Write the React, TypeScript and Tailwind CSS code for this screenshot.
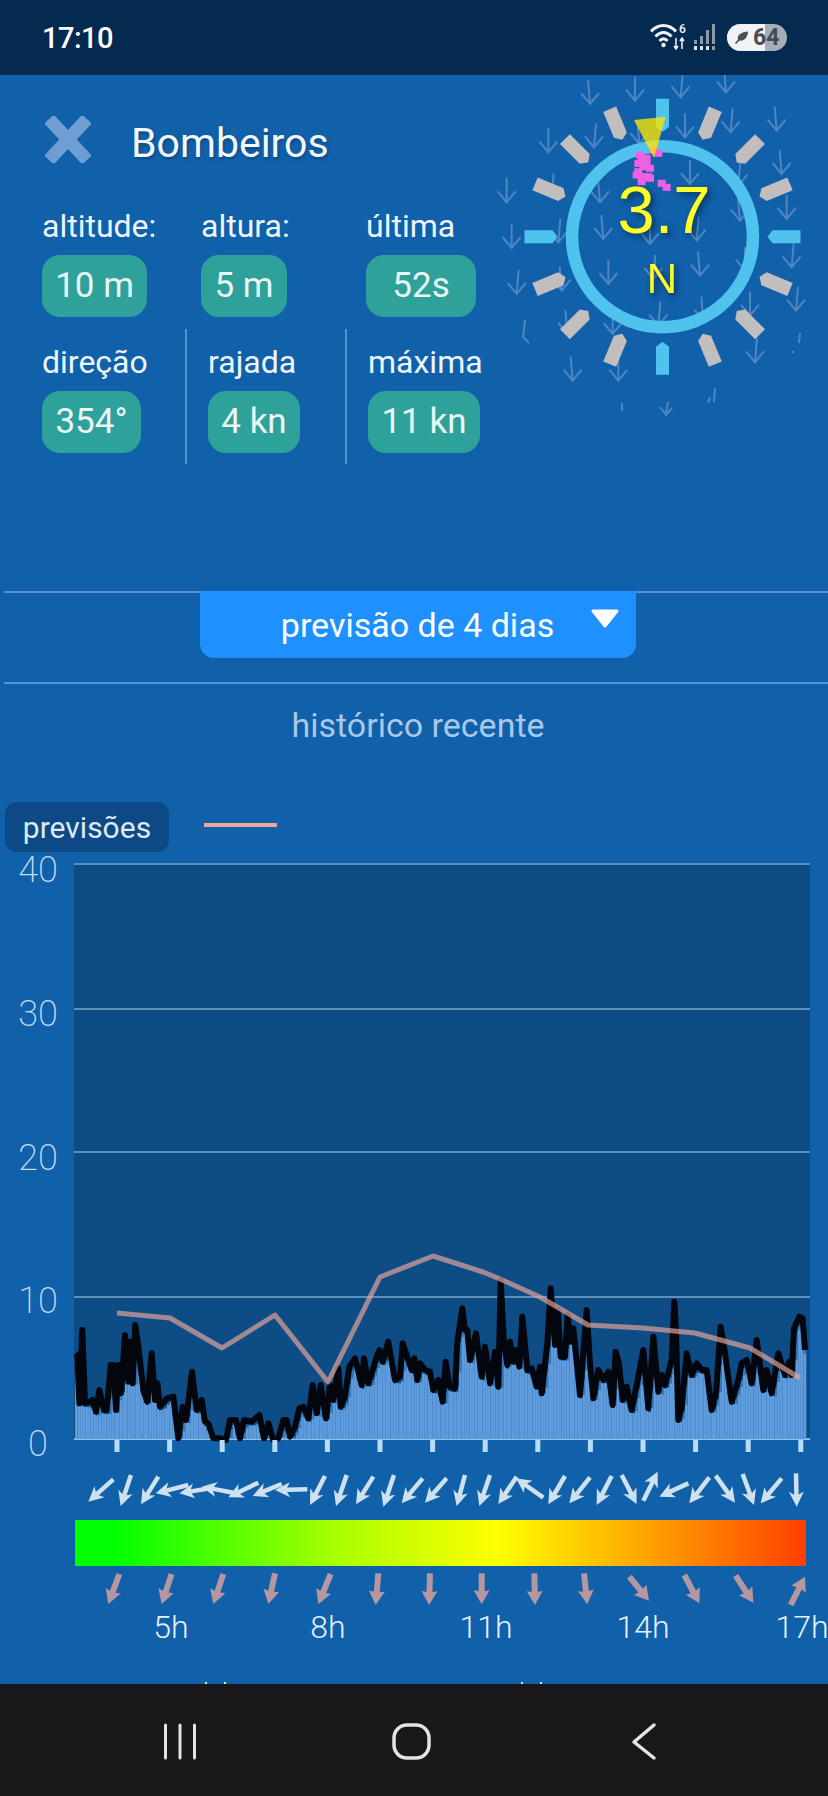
import React from "react";

type Pt = [number, number];

// wind line, traced from the chart (crop coordinates, converted below)
const lineA: Pt[] = [[47,370],[52,375],[58,520],[67,300],[75,520],[90,515],[97,510],[108,545],[118,480],[132,540],[140,540],[152,405],[160,405],[168,540],[175,405],[183,490],[195,315],[205,455],[210,335],[218,460],[226,285],[235,350],[250,480],[262,515],[275,370],[285,510],[292,460],[300,530],[320,505],[340,500],[355,625],[368,530],[378,570],[396,425],[410,540],[425,510],[435,575],[445,580],[460,625],[480,625],[498,630],[510,570],[528,570],[540,625],[552,570],[575,575],[598,555],[612,625],[625,580],[640,630],[655,625],[670,570],[680,570],[690,620],[705,590],[718,535],[730,530],[745,565],[758,465],[770,550],[782,465],[798,565],[810,465],[820,510],[835,415],[842,530],[855,500],[868,410],[885,385],[905,465],[912,385],[925,460],[935,430],[950,380],[958,360],[968,395],[985,335],[1005,450],[1020,440],[1028,340],[1045,390],[1055,420],[1063,385],[1072,450],[1080,400],[1095,420]];
const lineB: Pt[] = [[0,425],[10,480],[25,450],[38,515],[47,395],[58,470],[75,475],[82,335],[97,235],[105,300],[112,300],[120,390],[138,310],[155,440],[165,350],[180,460],[195,365],[205,470],[212,150],[222,340],[232,405],[240,335],[250,395],[258,360],[268,410],[277,260],[292,420],[305,415],[320,470],[330,410],[335,490],[352,340],[362,175],[375,345],[383,240],[392,380],[405,380],[413,255],[420,335],[430,295],[450,495],[470,240],[480,400],[490,505],[505,420],[520,450],[535,425],[548,525],[557,365],[567,400],[578,510],[590,470],[605,540],[620,465],[640,360],[655,535],[670,320],[685,485],[695,435],[705,465],[725,390],[733,215],[738,300],[745,570],[755,530],[770,370],[785,435],[800,400],[815,420],[830,420],[845,540],[858,490],[872,290],[885,370],[905,515],[925,450],[935,400],[950,390],[965,460],[980,330],[1000,480],[1010,420],[1025,490],[1045,370],[1065,435],[1078,395],[1085,435],[1092,295],[1108,260],[1118,265],[1125,360]];

const windLine: Pt[] = [
  ...lineA.map(([x, y]): Pt => [60 + x / 3, 1230 + y / 3]),
  ...lineB.map(([x, y]): Pt => [430 + x / 3, 1230 + y / 3]),
];

const forecastLine: Pt[] = [[117,1313],[170,1318],[222,1348],[275,1315],[328,1382],[380,1277],[433,1256],[483,1272],[500,1279],[540,1297],[588,1325],[643,1328],[695,1333],[750,1348],[800,1378]];

const BASE = 1439;
const yTicks = [
  { label: "40", y: 864, ty: 882 },
  { label: "30", y: 1009, ty: 1026 },
  { label: "20", y: 1152, ty: 1170 },
  { label: "10", y: 1297, ty: 1313 },
  { label: "0", y: 1439, ty: 1456 },
];
const xTicks = Array.from({ length: 14 }, (_, i) => 117 + i * 52.6);

const heightAt = (x: number) => {
  for (let i = 1; i < windLine.length; i++) {
    const [x0, y0] = windLine[i - 1];
    const [x1, y1] = windLine[i];
    if (x <= x1) {
      const t = x1 === x0 ? 0 : (x - x0) / (x1 - x0);
      return BASE - (y0 + (y1 - y0) * Math.max(t, 0));
    }
  }
  return BASE - windLine[windLine.length - 1][1];
};

const minHeight = (x: number, w: number) => {
  let m = Infinity;
  for (let d = -w; d <= w; d += 1) m = Math.min(m, heightAt(x + d));
  return m;
};

const bars = Array.from({ length: 278 }, (_, i) => {
  const x = 75 + i * 2.63;
  return {
    x,
    dark: Math.max(minHeight(x, 1) - 5, 0),
    light: Math.max(minHeight(x, 3) - 4, 0),
  };
});

const toPoints = (pts: Pt[]) => pts.map(([x, y]) => `${x},${y}`).join(" ");

// tail -> tip arrow with a wedge head
const Arrow = ({ from, to, shaft, headW, headL, notch, fill }: { from: Pt; to: Pt; shaft: number; headW: number; headL: number; notch: number; fill: string }) => {
  const dx = to[0] - from[0];
  const dy = to[1] - from[1];
  const len = Math.hypot(dx, dy) || 1;
  const ux = dx / len;
  const uy = dy / len;
  const nx = -uy;
  const ny = ux;
  const at = (along: number, side: number) => `${from[0] + ux * along + nx * side},${from[1] + uy * along + ny * side}`;
  const pts = [
    at(0, shaft / 2),
    at(len - headL + notch, shaft / 2),
    at(len - headL, headW / 2),
    at(len, 0),
    at(len - headL, -headW / 2),
    at(len - headL + notch, -shaft / 2),
    at(0, -shaft / 2),
  ].join(" ");
  return <polygon points={pts} fill={fill} />;
};

const z7 = ([a, b, c, d]: number[]): [Pt, Pt] => [[60 + a / 3, 1460 + b / 3], [60 + c / 3, 1460 + d / 3]];
const z8 = ([a, b, c, d]: number[]): [Pt, Pt] => [[430 + a / 3, 1460 + b / 3], [430 + c / 3, 1460 + d / 3]];

const windArrows: [Pt, Pt][] = [
  ...[[160,58,85,125],[213,45,182,138],[295,50,243,133],[385,75,287,100],[450,85,358,100],[520,98,425,80],[595,68,505,112],[665,72,578,108],[742,88,645,90],[795,48,750,135],[860,45,828,138],[940,50,888,133],[1002,45,970,140],[1088,55,1025,130],[1160,55,1095,128]].map(z7),
  ...[[105,45,80,138],[180,45,148,138],[260,50,205,132],[340,113,258,55],[405,48,355,133],[480,52,418,130],[545,48,500,135],[575,45,620,132],[640,122,683,35],[775,70,688,110],[838,52,778,130],[857,47,915,128],[938,42,972,135],[1055,55,992,130],[1098,40,1100,140]].map(z8),
];

const forecastArrows: [Pt, Pt][] = [
  ...[[178,342,145,432],[335,342,305,432],[490,342,460,432],[645,340,625,432],[812,342,775,432],[955,340,947,435],[1110,340,1107,435]].map(z7),
  ...[[155,340,155,433],[313,340,315,435],[462,340,472,433],[598,350,657,422],[763,345,808,430],[917,347,970,428],[1082,435,1125,350]].map(z8),
];

const hours = [
  { label: "5h", x: 171 },
  { label: "8h", x: 328 },
  { label: "11h", x: 486 },
  { label: "14h", x: 643 },
  { label: "17h", x: 802 },
];

// compass drawing, coordinates from a 3x crop starting at (490,75)
const faintArrows: number[][] = [[300,30],[435,20],[572,10],[708,-5],[175,175],[312,160],[448,150],[585,130],[722,115],[860,110],[50,325],[185,310],[330,325],[600,270],[745,275],[875,240],[65,462],[205,445],[340,435],[480,450],[620,440],[750,380],[890,375],[80,600],[215,590],[355,570],[490,555],[630,545],[765,530],[905,520],[232,720],[368,720],[505,695],[640,680],[780,665],[918,650],[248,860],[385,860],[795,805]];
const pinkSquares: Pt[] = [[505,250],[490,240],[470,265],[455,270],[445,280],[470,285],[480,295],[445,305],[440,315],[460,320],[480,325],[455,335],[475,320],[460,290],[450,255],[515,340],[530,352]];
const CX = 172.5;
const CY = 161.7;

const Compass = () => (
  <svg width="338" height="345" viewBox="0 0 338 345" className="shrink-0">
    {faintArrows.map(([x, y], i) => {
      const px = x / 3;
      const py = y / 3 - 5;
      const lean = (i % 3) - 1;
      return (
        <path
          key={i}
          d={`M${px + lean * 2} ${py}L${px} ${py + 24}M${px - 9} ${py + 13}L${px} ${py + 24}L${px + 9} ${py + 13}`}
          stroke="#4f86c0"
          strokeWidth="2"
          fill="none"
        />
      );
    })}
    <path d="M35 245L33 262L39 268M132 328V336M178 327L176 338M170 332L176 340L182 333M218 328L220 322M224 327L225 313M310 258L309 268M303 276V278" stroke="#4f86c0" strokeWidth="2" fill="none" />
    {Array.from({ length: 16 }, (_, i) => {
      const major = i % 4 === 0;
      const w = major ? 6.5 : 7;
      return (
        <polygon
          key={i}
          transform={`rotate(${i * 22.5} ${CX} ${CY})`}
          points={`${CX - w},${CY - 138} ${CX + w},${CY - 138} ${CX + w},${CY - 110} ${CX},${CY - 105} ${CX - w},${CY - 110}`}
          fill={major ? "#4fc3ee" : "#c2bebd"}
        />
      );
    })}
    <circle cx={CX} cy={CY} r="90.5" fill="none" stroke="#4fc3ee" strokeWidth="12.5" />
    {pinkSquares.map(([x, y], i) => (
      <rect key={i} x={x / 3 - 4} y={y / 3 - 8.5} width="8" height="7" fill="#f060e0" />
    ))}
    <polygon points="144,45 175.7,41.7 164,83" fill="#ffe600" fillOpacity="0.78" />
    <g style={{ filter: "drop-shadow(3px 3px 3px rgba(0,0,0,0.45))" }}>
      <text x="174" y="158" textAnchor="middle" fontSize="67" fill="#ffff26" fontFamily="'Liberation Sans', sans-serif">3.7</text>
      <text x="172" y="218" textAnchor="middle" fontSize="42" fill="#ffff26" fontFamily="'Liberation Sans', sans-serif">N</text>
    </g>
  </svg>
);

const Stat = ({ label, value, pillW }: { label: string; value: string; pillW: string }) => (
  <div className="flex flex-col">
    <div className="h-[36px] text-[32px] leading-[36px] text-[#eef5fb] whitespace-nowrap">{label}</div>
    <div className={`mt-[11px] h-[62px] rounded-[18px] bg-[#2ea19b] flex items-center justify-center text-[35px] text-[#e9f6f5] ${pillW}`}>{value}</div>
  </div>
);

const StatusBar = () => (
  <div className="h-[75px] shrink-0 bg-[#052a50] flex items-center justify-between pl-[42px] pr-[41px]">
    <span className="text-[29px] font-medium text-white tracking-[-0.5px] mt-[2px]">17:10</span>
    <div className="flex items-center -mt-[1px]">
      <svg width="38" height="28" viewBox="0 0 38 28" fill="none" stroke="#f2f5f8" strokeLinecap="butt">
        <path d="M1 8.5C8.500 0.5 18.500 0.5 26 8.500" strokeWidth="3" />
        <path d="M5.500 13.500C10.500 8 16.500 8 21.500 13.500" strokeWidth="3" />
        <path d="M9.500 18C12 15 15 15 17.500 18" strokeWidth="3" />
        <circle cx="13.500" cy="22" r="2.200" fill="#f2f5f8" stroke="none" />
        <path d="M26 15V26M24 23L26 26L28 23M32 26V15M30 18L32 15L34 18" strokeWidth="1.500" />
        <text x="29" y="10" fontSize="12" fontWeight="500" fill="#f2f5f8" stroke="none">6</text>
      </svg>
      <svg width="26" height="28" viewBox="0 0 26 28" className="ml-[5px]" fill="#8e99a6">
        <rect x="1" y="17" width="3" height="4" />
        <rect x="7" y="13" width="3" height="8" />
        <rect x="13" y="7" width="3" height="14" />
        <rect x="19" y="1" width="3" height="20" />
        <rect x="1" y="23" width="3" height="4" fill="#dfe4ea" />
        <rect x="7" y="23" width="3" height="4" fill="#dfe4ea" />
        <rect x="13" y="23" width="3" height="4" fill="#dfe4ea" />
        <rect x="19" y="23" width="3" height="4" />
      </svg>
      <div className="ml-[8px] w-[60px] h-[27px] rounded-full overflow-hidden relative bg-[#a7adb6] flex items-center">
        <div className="w-[38px] h-full bg-[#f0f2f4] flex items-center pl-[7px]">
          <svg width="15" height="14" viewBox="0 0 15 14" fill="#4a4f55">
            <path d="M1 13C2 12 3 10.500 4 9.500C2.500 5 8 2 14 1.500C14 7 10 11.500 5.500 10.500C4.500 11.500 3 13 2 14Z" />
          </svg>
        </div>
        <span className="absolute left-[26px] text-[23px] font-bold text-[#454a50] leading-none">64</span>
      </div>
    </div>
  </div>
);

const Chart = () => (
  <svg width="828" height="670" viewBox="0 850 828 670" className="block">
    <rect x="74" y="864" width="736" height="575" fill="#0e4c85" />
    {yTicks.map((t) => (
      <g key={t.label}>
        <rect x="74" y={t.y - 1} width="736" height="2" fill={t.label === "0" ? "#8fc0ea" : "#5f8fba"} />
        <text x="38" y={t.ty} textAnchor="middle" fontSize="36" fontWeight="200" fill="#c4dcf2">{t.label}</text>
      </g>
    ))}
    {bars.map((b, i) => (
      <g key={i}>
        <rect x={b.x} y={BASE - b.dark} width="2.7" height={b.dark} fill="#3478bc" />
        <rect x={b.x} y={BASE - b.light} width="2.7" height={b.light} fill="#5c98d8" />
        <rect x={b.x + 0.5} y={BASE - b.light} width="1.6" height={b.light} fill="#619ddc" />
      </g>
    ))}
    <polyline points={toPoints(windLine)} fill="none" stroke="#03070d" strokeWidth="6" strokeLinejoin="round" />
    <polyline points={toPoints(forecastLine)} fill="none" stroke="#e8a59a" strokeOpacity="0.68" strokeWidth="5" strokeLinejoin="round" />
    {xTicks.map((x) => (
      <rect key={x} x={x - 2.5} y="1440" width="5" height="12" fill="#b8dcf8" />
    ))}
    {windArrows.map(([a, b], i) => (
      <Arrow key={i} from={a} to={b} shaft={4.5} headW={15} headL={15} notch={3} fill="#cfe0ef" />
    ))}
  </svg>
);

const BottomScale = () => (
  <svg width="828" height="118" viewBox="0 1566 828 118" className="block">
    {forecastArrows.map(([a, b], i) => (
      <Arrow key={i} from={a} to={b} shaft={6} headW={16} headL={14} notch={1} fill="#b6979f" />
    ))}
    {hours.map((h) => (
      <text key={h.label} x={h.x} y="1638" textAnchor="middle" fontSize="32" fontWeight="300" fill="#e4f1fb">{h.label}</text>
    ))}
    <rect x="205" y="1682" width="2" height="2" fill="#dbe8f5" />
    <rect x="224" y="1682" width="2" height="2" fill="#dbe8f5" />
    <rect x="521" y="1682" width="2" height="2" fill="#dbe8f5" />
    <rect x="540" y="1682" width="2" height="2" fill="#dbe8f5" />
  </svg>
);

const NavBar = () => (
  <div className="h-[112px] shrink-0 bg-[#18181a] relative">
    <svg width="828" height="112" viewBox="0 0 828 112" fill="none" stroke="#e4e4e4" strokeLinecap="round" className="block">
      <path d="M165.500 41V74M180 41V74M194.500 41V74" strokeWidth="3" />
      <rect x="394" y="41" width="35" height="33" rx="13" strokeWidth="3.500" />
      <path d="M654 41L634 58L654 74" strokeWidth="3.500" strokeLinejoin="round" />
    </svg>
  </div>
);

export default function App() {
  return (
    <div className="w-[828px] h-[1796px] flex flex-col overflow-hidden bg-[#1060aa] font-['Roboto',sans-serif]">
      <StatusBar />
      <div className="flex-1 flex flex-col">
        {/* station header */}
        <div className="h-[516px] flex">
          <div className="w-[490px] shrink-0 pl-[42px] pt-[40px]">
            <div className="flex items-center h-[48px]">
              <svg width="46" height="47" viewBox="0 0 46 47" fill="none" stroke="#6f9fd2" strokeWidth="13" className="shrink-0 ml-[3px]">
                <path d="M4 3L42 44M42 3L4 44" />
              </svg>
              <span className="ml-[40px] mt-[9px] text-[41px] text-[#f4f8fc] [text-shadow:1px_2px_3px_rgba(0,0,0,0.25)]">Bombeiros</span>
            </div>
            <div className="flex mt-[45px]">
              <div className="w-[159px]"><Stat label="altitude:" value="10 m" pillW="w-[105px]" /></div>
              <div className="w-[165px]"><Stat label="altura:" value="5 m" pillW="w-[86px]" /></div>
              <div><Stat label="última" value="52s" pillW="w-[110px]" /></div>
            </div>
            <div className="flex mt-[12px] h-[135px]">
              <div className="w-[145px] pt-[15px] border-r-2 border-[#5b93cc]"><Stat label="direção" value="354°" pillW="w-[99px]" /></div>
              <div className="w-[160px] pt-[15px] pl-[21px] border-r-2 border-[#5b93cc]"><Stat label="rajada" value="4 kn" pillW="w-[92px]" /></div>
              <div className="pt-[15px] pl-[21px]"><Stat label="máxima" value="11 kn" pillW="w-[112px]" /></div>
            </div>
          </div>
          <Compass />
        </div>

        {/* period selector */}
        <div className="ml-[4px] h-[2px] bg-[#5b93cc]" />
        <div className="relative -mt-[2px] ml-[200px] w-[436px] h-[67px] rounded-b-[14px] bg-[#1e90ff] flex items-center justify-center text-[34px] text-white">
          <span className="mt-[1px] -ml-[1px]">previsão de 4 dias</span>
          <svg width="30" height="20" viewBox="0 0 30 20" className="absolute left-[390px] top-[18px]">
            <path d="M3 2H27L15 17Z" fill="#ffffff" stroke="#ffffff" strokeWidth="3" strokeLinejoin="round" />
          </svg>
        </div>
        <div className="ml-[4px] mt-[24px] h-[2px] bg-[#5b93cc]" />
        <div className="h-[84px] flex items-center justify-center text-[34px] text-[#a9c8ea] -mt-[2px] pt-[2px] pl-[8px]">histórico recente</div>

        {/* legend */}
        <div className="flex items-center mt-[36px] ml-[5px]">
          <div className="w-[164px] h-[50px] rounded-[12px] bg-[#0d4a85] flex items-center justify-center text-[30px] text-[#dce9f6]">previsões</div>
          <div className="ml-[35px] -mt-[4px] w-[73px] h-[4px] bg-[#eaa79c]" />
        </div>

        {/* chart */}
        <div className="-mt-[2px]"><Chart /></div>
        <div className="ml-[75px] w-[731px] h-[46px] bg-[linear-gradient(90deg,#00ff00_5%,#aaff00_36%,#ffff00_58%,#ff4000_100%)]" />
        <BottomScale />
      </div>
      <NavBar />
    </div>
  );
}
